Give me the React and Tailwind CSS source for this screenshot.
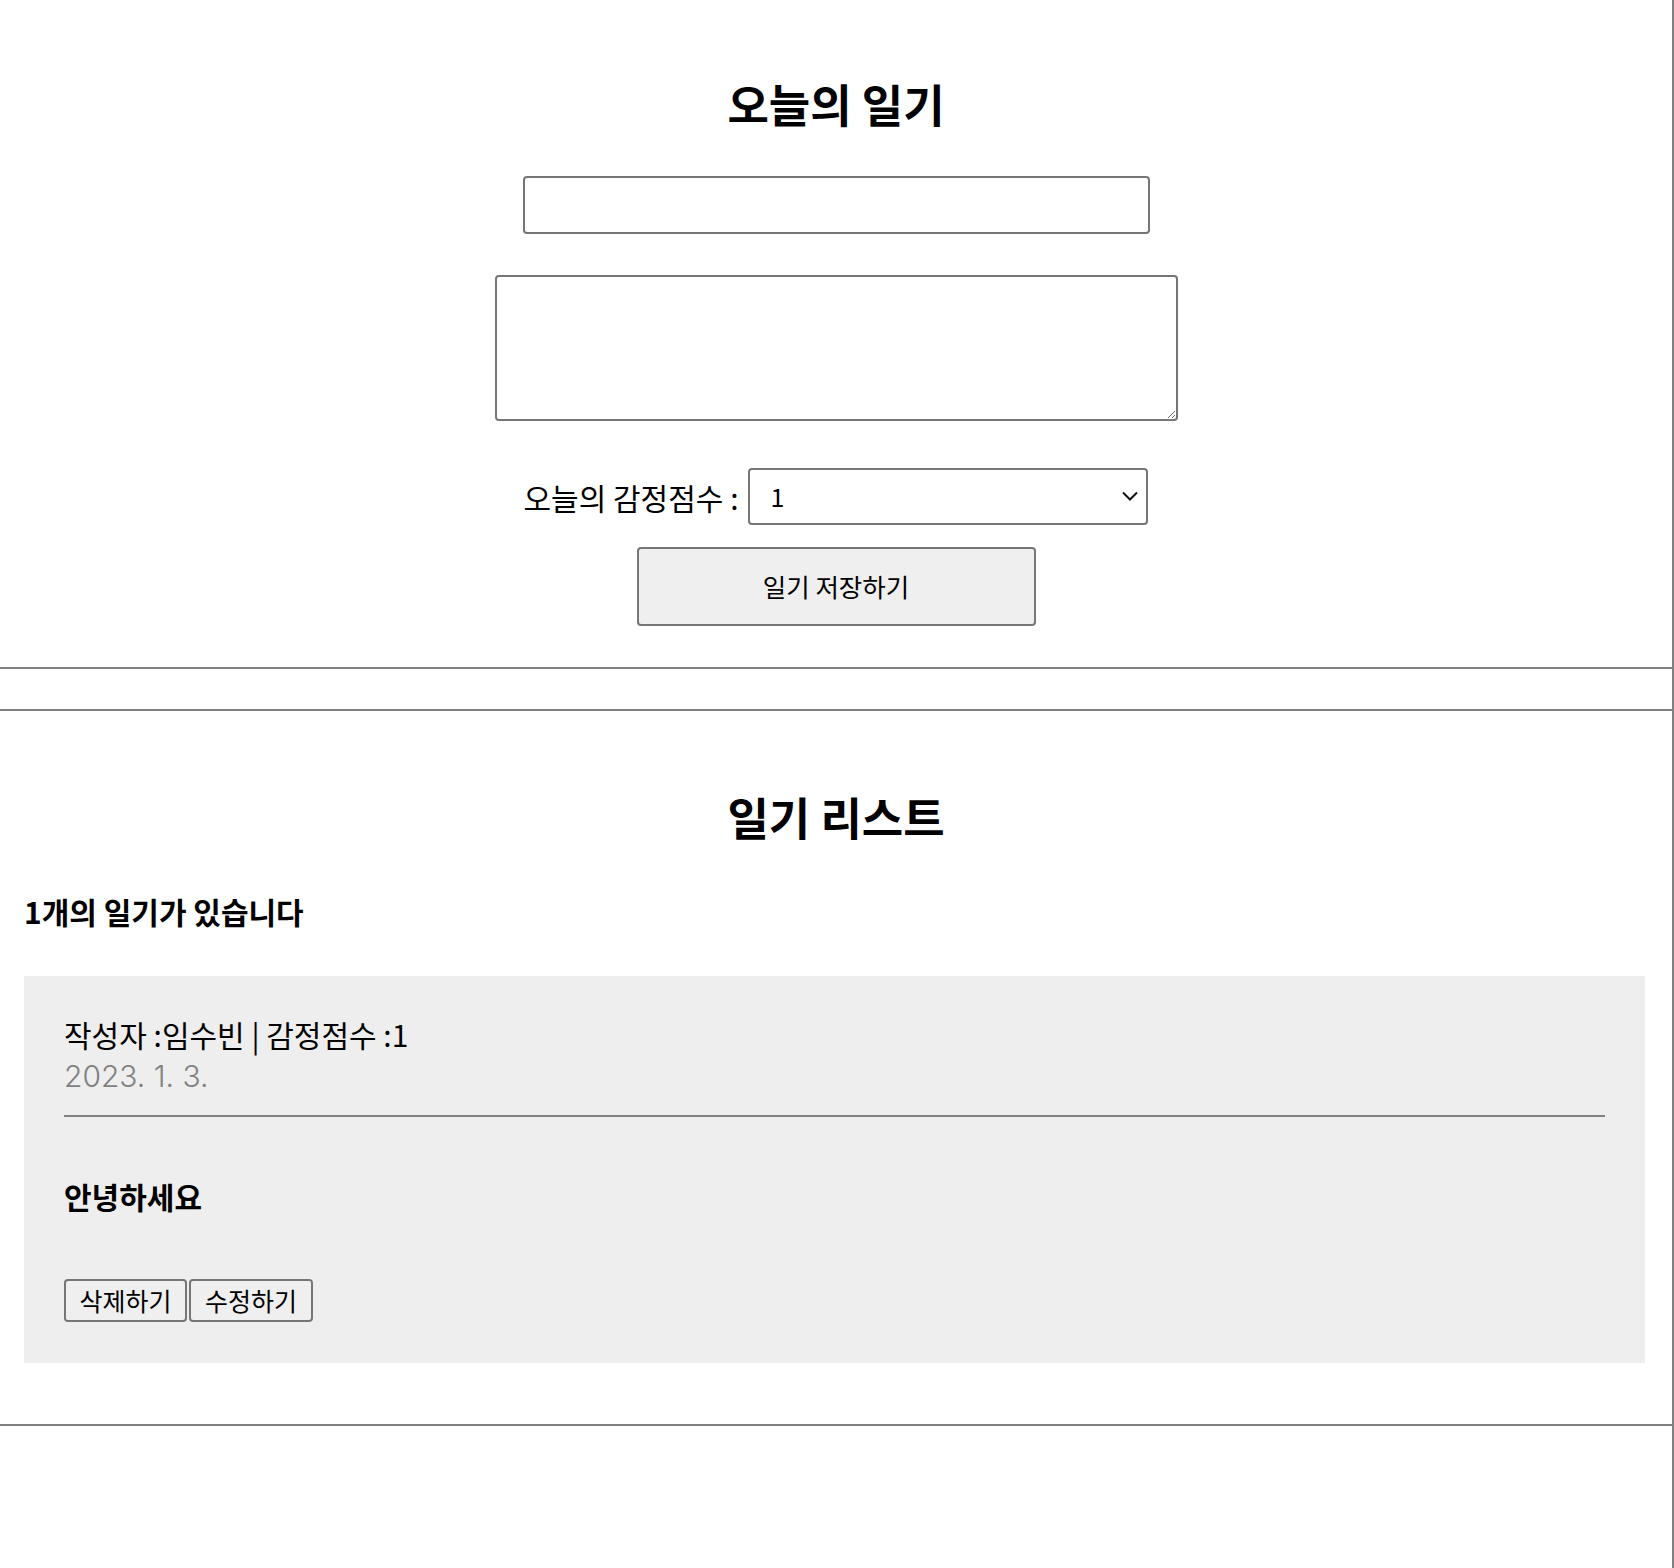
import React from 'react';

const font = { fontFamily: '"Noto Sans CJK KR", "Noto Sans", sans-serif' };

/**
 * DiaryEditor
 *
 * 오늘의 일기 작성 폼.
 */
function DiaryEditor() {
    return (
        <div className="h-[669px] border-b-2 border-[#808080] flex flex-col items-center">
            <h2 className="mt-[74px] text-[45px] leading-[60px] font-bold text-black">오늘의 일기</h2>
            <input
                className="mt-[42px] w-[627px] h-[58px] border-2 border-[#767676] rounded-[4px] bg-white"
                defaultValue=""
            />
            <textarea
                className="mt-[41px] w-[683px] h-[146px] border-2 border-[#767676] rounded-[4px] bg-white"
                defaultValue=""
            />
            <div className="mt-[47px] flex items-center gap-[10px]">
                <span className="text-[30px] leading-[40px] text-black">오늘의 감정점수 :</span>
                <div className="relative">
                    <select
                        className="appearance-none w-[400px] h-[57px] border-2 border-[#767676] rounded-[4px] bg-white pl-[20px] text-[25px] text-black"
                        defaultValue="1"
                        style={font}
                    >
                        <option value="1">1</option>
                        <option value="2">2</option>
                        <option value="3">3</option>
                        <option value="4">4</option>
                        <option value="5">5</option>
                    </select>
                    <svg
                        className="absolute right-[9px] top-[21px] pointer-events-none"
                        width="18"
                        height="14"
                        viewBox="0 0 18 14"
                        fill="none"
                    >
                        <path d="M2 3.5 L9 10.5 L16 3.5" stroke="#111" strokeWidth="2" />
                    </svg>
                </div>
            </div>
            <button
                className="mt-[22px] w-[399px] h-[79px] border-2 border-[#767676] rounded-[4px] bg-[#efefef] text-[25.5px] text-black"
                style={font}
            >
                일기 저장하기
            </button>
        </div>
    );
}

/**
 * DiaryItem
 */
function DiaryItem({item}) {
    return (
        <div className="ml-6 mr-[27px] mt-[45px] bg-[#eeeeee] px-10 pt-[37px] pb-[41px]">
            <div className="text-[30px] leading-[42px] text-black">
                작성자 :{item.author} | 감정점수 :{item.emotion}
            </div>
            <div className="font-['Inter',sans-serif] font-light text-[30px] leading-[42px] text-[#808080]">{item.date}</div>
            <div className="mt-[18px] h-[2px] bg-[#808080]" />
            <div className="mt-[58px] text-[30px] leading-[42px] font-bold text-black">{item.content}</div>
            <div className="mt-[62px] flex gap-[2px]">
                <button
                    className="w-[123px] h-[43px] border-2 border-[#767676] rounded-[4px] bg-[#efefef] text-[25px] text-black"
                    style={font}
                >
                    삭제하기
                </button>
                <button
                    className="w-[124px] h-[43px] border-2 border-[#767676] rounded-[4px] bg-[#efefef] text-[25px] text-black"
                    style={font}
                >
                    수정하기
                </button>
            </div>
        </div>
    );
}

/**
 * DiaryList
 */
function DiaryList({diaryList}) {
    return (
        <div className="mt-10 border-t-2 border-b-2 border-[#808080] pb-[61px]">
            <h2 className="mt-[76px] text-center text-[45px] leading-[60px] font-bold text-black">일기 리스트</h2>
            <h4 className="mt-[44px] pl-6 text-[30px] leading-[40px] font-bold text-black">
                {diaryList.length}개의 일기가 있습니다
            </h4>
            {diaryList.map(item => <DiaryItem key={item.id} item={item} />)}
        </div>
    );
}

export default function App() {
    const diaryList = [
        {id: 1, author: '임수빈', emotion: 1, date: '2023. 1. 3.', content: '안녕하세요'},
    ];

    return (
        <div className="w-full min-h-[1568px] bg-white border-r-2 border-[#808080]" style={font}>
            <DiaryEditor />
            <DiaryList diaryList={diaryList} />
        </div>
    );
}
